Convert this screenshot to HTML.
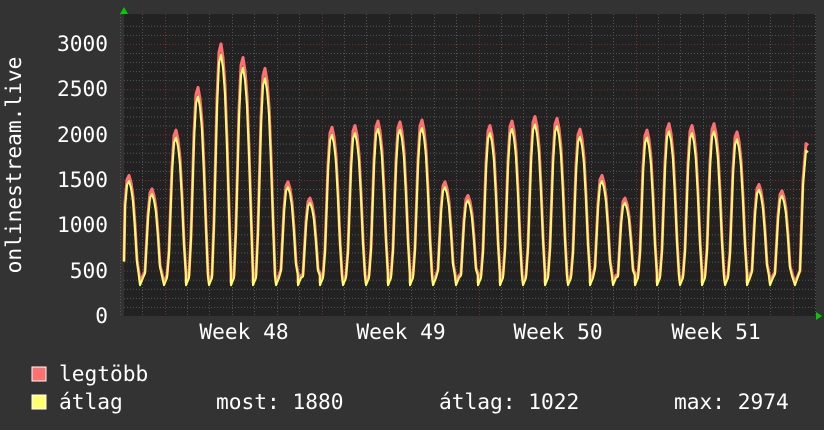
<!DOCTYPE html>
<html><head><meta charset="utf-8"><style>
html,body{margin:0;padding:0;background:#333;}
svg{display:block}
text{font-family:"DejaVu Sans Mono","Liberation Mono",monospace;font-size:21.2px;fill:#fff;}
</style></head><body>
<svg id="g" width="824" height="430" xmlns="http://www.w3.org/2000/svg">
<rect width="824" height="430" fill="#333"/>
<rect x="124" y="14" width="692" height="302" fill="#222"/>
<g id="grid"></g>
<path id="red" fill="none" stroke="#ff6f6f" stroke-width="3" stroke-linejoin="round"/>
<path id="yel" fill="none" stroke="#ffff70" stroke-width="2" stroke-linejoin="round"/>
<polygon points="120,14 128,14 124,7" fill="#0c0"/>
<polygon points="816,312 816,320 822,316" fill="#0c0"/>
<g text-anchor="end">
<text x="108" y="323">0</text><text x="108" y="278">500</text><text x="108" y="232">1000</text>
<text x="108" y="187">1500</text><text x="108" y="142">2000</text><text x="108" y="96">2500</text><text x="108" y="51">3000</text>
</g>
<text transform="translate(21,165) rotate(-90)" text-anchor="middle">onlinestream.live</text>
<g text-anchor="middle">
<text x="244" y="339">Week 48</text><text x="401" y="339">Week 49</text>
<text x="558" y="339">Week 50</text><text x="716" y="339">Week 51</text>
</g>
<rect x="32" y="367" width="14" height="14" fill="#ff7070" stroke="#fff" stroke-width="1"/>
<rect x="32" y="395" width="14" height="14" fill="#ffff70" stroke="#fff" stroke-width="1"/>
<text x="59" y="381">legtöbb</text>
<text x="59" y="409">átlag</text>
<text x="216" y="409">most: 1880</text>
<text x="439" y="409">átlag: 1022</text>
<text x="674" y="409">max: 2974</text>
</svg>
<script>
var ns="http://www.w3.org/2000/svg",g=document.getElementById("grid");
function ln(x1,y1,x2,y2,c){var l=document.createElementNS(ns,"line");l.setAttribute("x1",x1);l.setAttribute("y1",y1);l.setAttribute("x2",x2);l.setAttribute("y2",y2);l.setAttribute("stroke",c);l.setAttribute("stroke-dasharray","1,2");g.appendChild(l);}
function Y(v){return 316-v*0.0907;}
for(var v=100;v<=3200;v+=100){var y=Y(v);if(y<14)break;ln(124,y+0.5,816,y+0.5,v%500==0?"#7a3030":"#555");}
for(var x=164.5-22.4*2;x<816;x+=22.43){var d=Math.round((x-164.5)/22.43);ln(Math.round(x)+0.5,14,Math.round(x)+0.5,316,(d%7==0)?"#7a3030":"#555");}
var pk=[[129,1550],[152,1400],[176,2050],[198,2520],[221,3000],[243,2850],[265,2730],[288,1480],[310,1300],[332,2080],[355,2100],[378,2150],[400,2140],[422,2160],[445,1480],[468,1330],[490,2100],[512,2150],[535,2200],[557,2180],[580,2060],[602,1550],[625,1300],[647,2050],[669,2120],[692,2100],[714,2120],[737,2030],[759,1450],[782,1380]];
function build(f,lo){var p="M124,"+Y(600);for(var i=0;i<pk.length;i++){var x=pk[i][0],P=pk[i][1]*f;
var pts=[[x-12,lo],[x-9,lo+80],[x-7,P*0.35],[x-4,P*0.8],[x-2,P*0.97],[x,P],[x+2,P*0.95],[x+4,P*0.85],[x+6,P*0.65],[x+8,P*0.4],[x+10,lo+100]];
pts.forEach(function(q){if(q[0]>=124)p+=" L"+q[0]+","+Y(q[1]).toFixed(1);});}
p+=" L795,"+Y(lo)+" L800,"+Y(500)+" L803,"+Y(1500*f)+" L806,"+Y(1900*f)+" L808,"+Y(1880*f);return p;}
document.getElementById("red").setAttribute("d",build(1,370));
document.getElementById("yel").setAttribute("d",build(0.96,340));
</script>
</body></html>
